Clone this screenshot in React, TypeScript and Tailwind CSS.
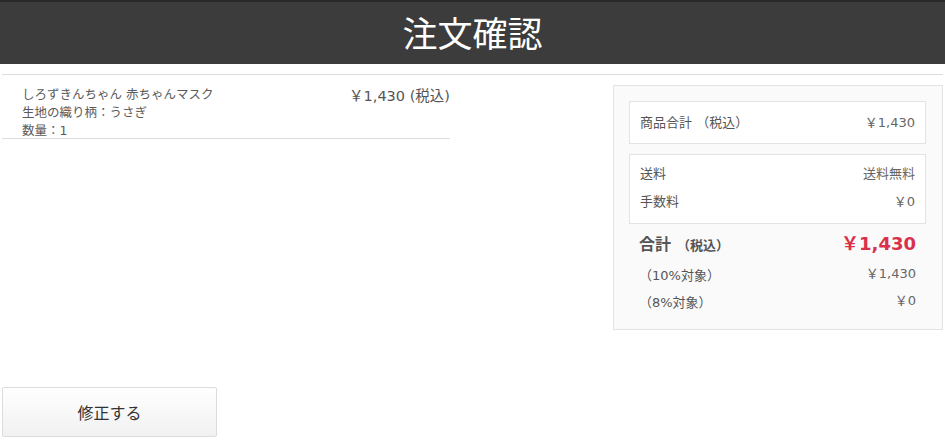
import React from "react";

const FONT = '"DejaVu Sans", "Noto Sans CJK JP", "Noto Sans", sans-serif';
const JP = '"Noto Sans CJK JP", "Noto Sans", sans-serif';

export default function App() {
  return (
    <div className="w-[945px] h-[443px] bg-white overflow-hidden" style={{ fontFamily: FONT }}>
      <header className="relative h-[64px] bg-[#3c3c3c] border-t-2 border-[#2a2a2a] overflow-hidden flex items-center justify-center">
        <span className="absolute top-[-11px] left-[424px] text-[12px] leading-[14px] tracking-[2px] text-[#9a9a9a]">
          ORDERCONFIRM
        </span>
        <h1 className="text-[35px] leading-none text-white font-normal mt-[-4px]" style={{ fontFamily: JP }}>注文確認</h1>
      </header>

      <div className="mt-[10px] mx-[2px] border-t border-[#dcdcdc]" />

      <div className="flex justify-between items-start pl-[2px] pr-[2px]">
        <div className="w-[448px] flex justify-between border-b border-[#dcdcdc] pt-[11px] pb-0 h-[64px]">
          <div className="pl-[20px] text-[12.5px] leading-[18px] text-[#5a5a5a]">
            <div>しろずきんちゃん 赤ちゃんマスク</div>
            <div>生地の織り柄：うさぎ</div>
            <div>数量：1</div>
          </div>
          <div className="text-[14.5px] leading-[20px] text-[#555]">￥1,430 (税込)</div>
        </div>

        <div className="mt-[10px] w-[330px] h-[245px] bg-[#fafafa] border border-[#e3e3e3] pl-[15px] pr-[16px] pt-[15px]">
          <div className="h-[43px] bg-white border border-[#e3e3e3] px-[10px] flex items-center justify-between text-[13px] text-[#555]">
            <span>商品合計 （税込）</span>
            <span className="text-[#666]">￥1,430</span>
          </div>
          <div className="mt-[10px] h-[70px] bg-white border border-[#e3e3e3] px-[10px] py-[5px] text-[13px] text-[#555]">
            <div className="h-[28px] flex items-center justify-between">
              <span>送料</span>
              <span className="text-[#666]">送料無料</span>
            </div>
            <div className="h-[28px] flex items-center justify-between">
              <span>手数料</span>
              <span className="text-[#666]">￥0</span>
            </div>
          </div>
          <div className="px-[10px] pt-[5px]">
            <div className="h-[32px] flex items-center justify-between">
              <span className="text-[#555] font-bold">
                <span className="text-[16px]">合計</span>
                <span className="text-[13px] ml-[6px]">（税込）</span>
              </span>
              <span className="text-[18px] font-bold text-[#d9304b] mt-[-3px]">￥1,430</span>
            </div>
            <div className="h-[27px] flex items-center justify-between text-[13px]">
              <span className="text-[#555] mt-[2px]">（10%対象）</span>
              <span className="text-[#666] mt-[-2px]">￥1,430</span>
            </div>
            <div className="h-[27px] flex items-center justify-between text-[13px]">
              <span className="text-[#555] mt-[2px]">（8%対象）</span>
              <span className="text-[#666] mt-[-2px]">￥0</span>
            </div>
          </div>
        </div>
      </div>

      <div className="pl-[2px] mt-[57px]">
        <button className="w-[215px] h-[50px] border border-[#dcdcdc] rounded-[2px] bg-gradient-to-b from-white to-[#f1f1f1] text-[16px] text-[#333] flex items-center justify-center" style={{ fontFamily: JP }}>
          修正する
        </button>
      </div>
    </div>
  );
}
